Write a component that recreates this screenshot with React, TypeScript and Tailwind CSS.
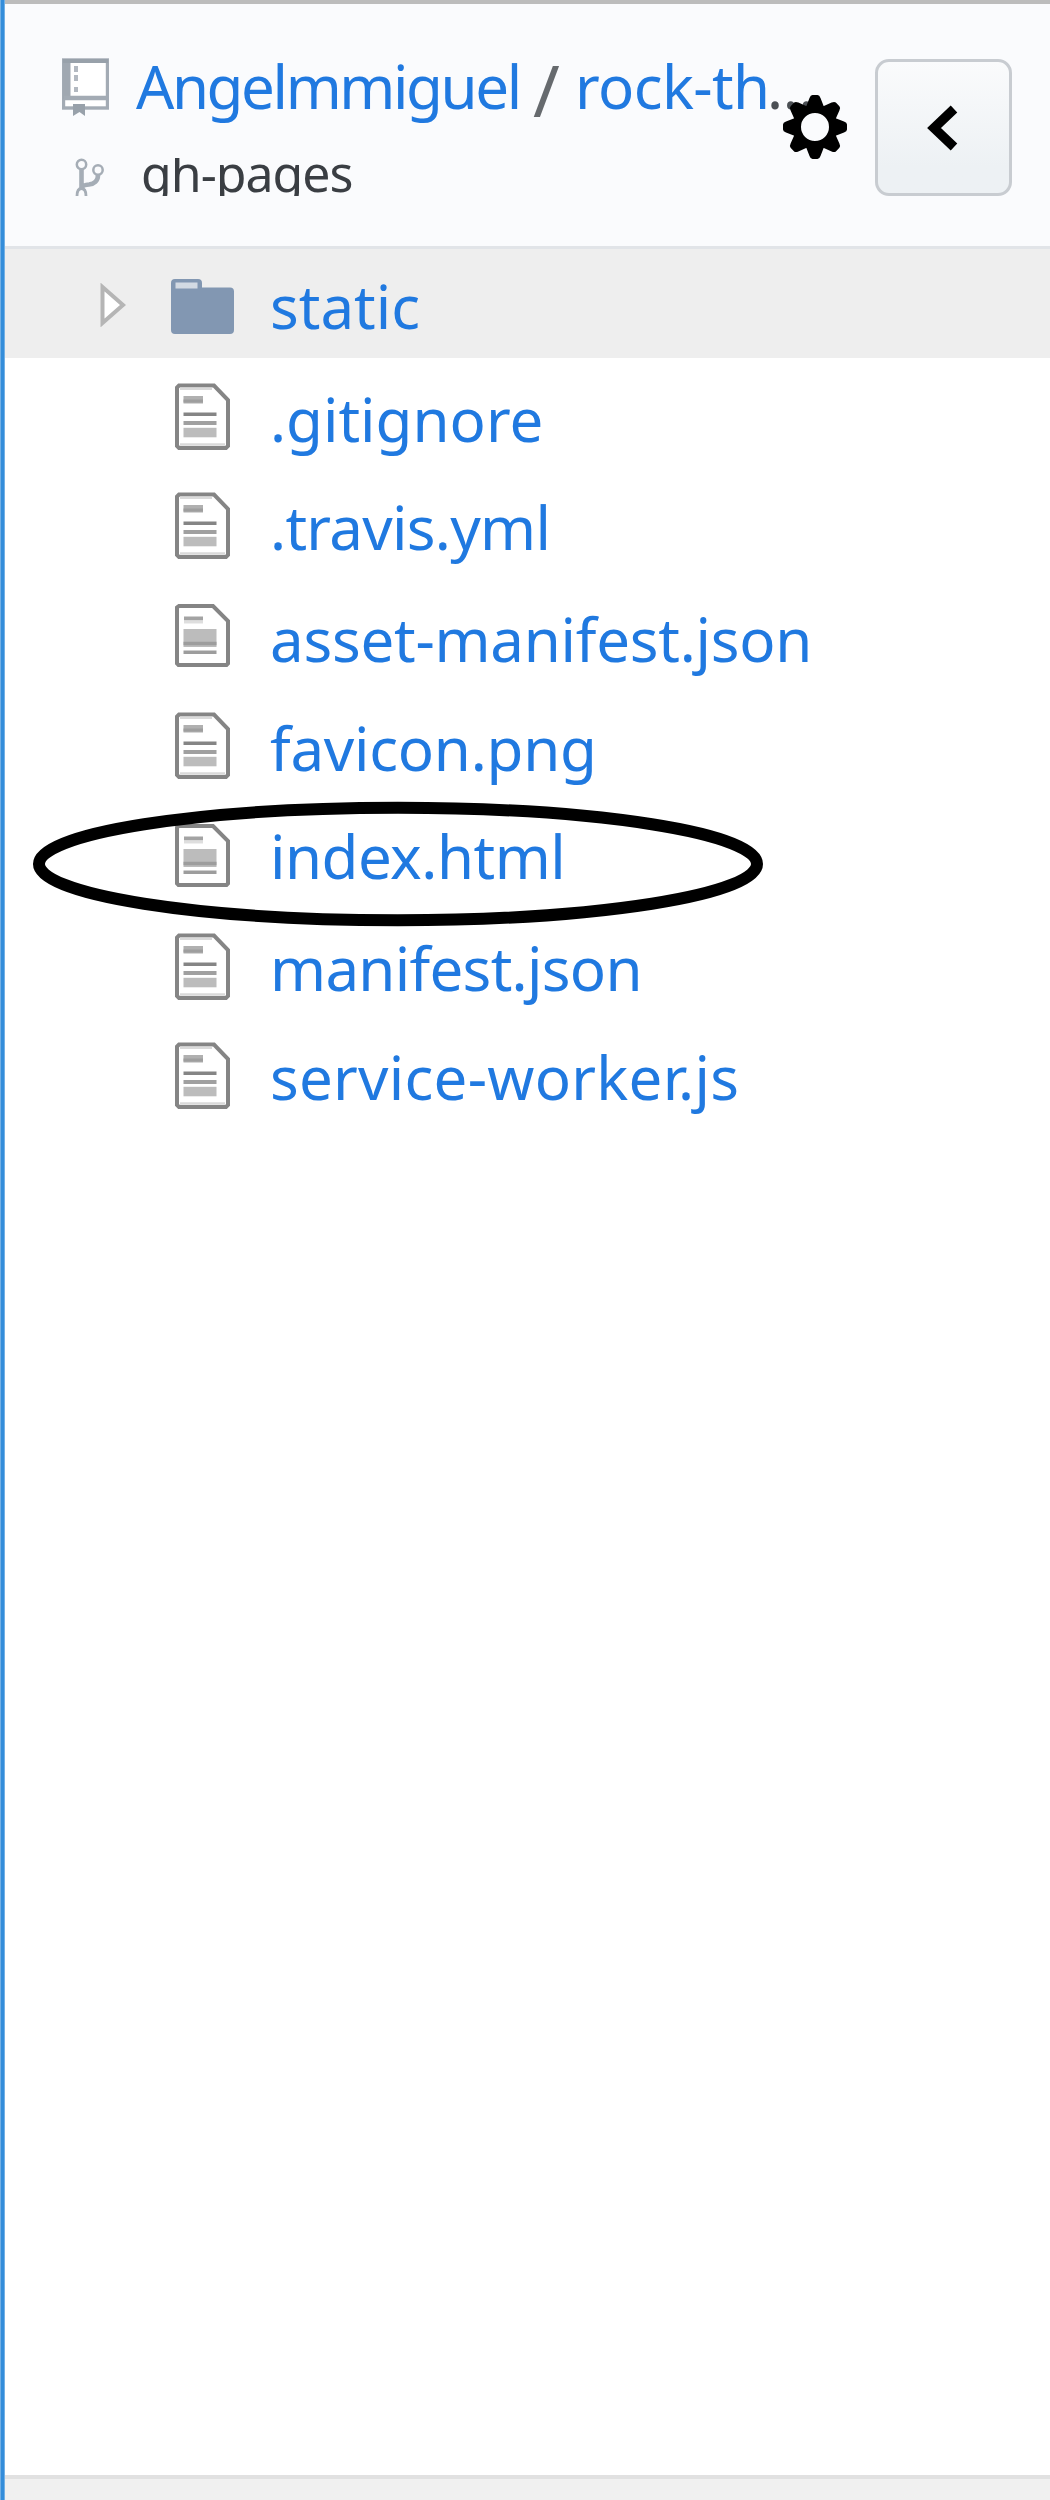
function RepoIcon() {
  return (
    <svg className="h-[60px] w-[47px] shrink-0" viewBox="0 0 47 60">
      <rect x="1.5" y="2" width="44" height="48" fill="#fff" stroke="#a3abb4" strokeWidth="3.4" />
      <rect x="1" y="1" width="7.5" height="40" fill="#a0a8b1" />
      <path d="M1 3H46" stroke="#98a1aa" strokeWidth="4" />
      <path d="M2 40H45" stroke="#a3abb4" strokeWidth="4.500" />
      <path d="M14 8v6M14 17v6M14 29v5" stroke="#b3b9c1" strokeWidth="4" />
      <path d="M11 46h12v12l-5.500-4l-6.500 4z" fill="#98a1aa" />
    </svg>
  );
}

function BranchIcon() {
  return (
    <svg className="h-[38px] w-[29px] shrink-0" viewBox="0 0 29 38" fill="none" stroke="#a5adb6">
      <circle cx="6.500" cy="6.500" r="4.700" strokeWidth="2.500" />
      <circle cx="23" cy="12" r="4.700" strokeWidth="2.500" />
      <path d="M6.500 11V30M23 17c0 6-4 9-9 9.500c-4 .3-6 1-7 2.500" strokeWidth="4.600" />
      <path d="M2 38c0-5 2-7.500 4.500-7.500s4.500 2.500 4.500 7.500" strokeWidth="2.800" />
    </svg>
  );
}

function GearIcon() {
  return (
    <svg className="h-16 w-16" viewBox="-32 -32 64 64">
      <g fill="#000">
        {[0, 45, 90, 135, 180, 225, 270, 315].map((angle) => (
          <path key={angle} d="M-9-20L-5.500-29Q-4.500-32-2.500-32H2.500Q4.500-32 5.500-29L9-20z" transform={`rotate(${angle})`} />
        ))}
      </g>
      <circle r="18.200" fill="#fafbfd" stroke="#000" strokeWidth="8.400" />
    </svg>
  );
}

function FolderIcon() {
  return (
    <svg className="h-[55px] w-[63px] shrink-0" viewBox="0 0 63 55">
      <path d="M0 4q0-4 4-4H27q4 0 4 4v4.500H59q4 0 4 4V51q0 4-4 4H4q-4 0-4-4z" fill="#8297b2" />
      <rect x="4.500" y="3.500" width="22" height="6" fill="#d3dae3" />
    </svg>
  );
}

function FileIcon({ short }: { short?: boolean }) {
  return short ? (
    <svg className="h-[63px] w-[55px] shrink-0" viewBox="0 0 55 63">
      <path d="M4 2H38L53 17V59.500L51.500 61H3.500L2 59.500V3.500z" fill="#fff" stroke="#858585" strokeWidth="4" />
      <path d="M9 14.500H28" stroke="#a3a3a3" strokeWidth="4" />
      <path d="M9 18H28" stroke="#dedede" strokeWidth="3" />
      <rect x="8.500" y="25" width="33" height="18" fill="#bcbcbc" />
      <path d="M8.500 39.500H41.500M8.500 48.200H41.500" stroke="#9d9d9d" strokeWidth="3.500" />
    </svg>
  ) : (
    <svg className="h-[67px] w-[55px] shrink-0" viewBox="0 0 55 67">
      <path d="M4 2.500H39L53 17V63L51 65H4L2 63V4.500z" fill="#fff" stroke="#858585" strokeWidth="4" />
      <path d="M5 5.800H37M5 61.500H50" stroke="#dadada" strokeWidth="2.500" />
      <rect x="8.500" y="13" width="19.500" height="7.500" fill="#b0b0b0" />
      <path d="M8.500 18H28" stroke="#9e9e9e" strokeWidth="3" />
      <path d="M8.500 31.200H41.500" stroke="#858585" strokeWidth="3.600" />
      <path d="M8.500 40H41.500" stroke="#a0a0a0" strokeWidth="3.800" />
      <rect x="8.500" y="44.800" width="33" height="9.500" fill="#bcbcbc" />
    </svg>
  );
}

const files = [
  { name: ".gitignore", row: "h-[108px]", icon: "mt-[23px]", text: "tracking-[0px]" },
  { name: ".travis.yml", row: "h-[112px]", icon: "mt-[24px]", text: "tracking-[-0.7px]" },
  { name: "asset-manifest.json", row: "h-[109px]", icon: "mt-[24px]", text: "tracking-[-0.25px]", short: true },
  { name: "favicon.png", row: "h-[108px]", icon: "mt-[23px]", text: "tracking-[-0.25px]" },
  { name: "index.html", row: "h-[112px]", icon: "mt-[27px]", text: "tracking-[-0.5px]", short: true, circled: true },
  { name: "manifest.json", row: "h-[109px]", icon: "mt-[24px]", text: "tracking-[-0.7px]" },
  { name: "service-worker.js", row: "h-[110px]", icon: "mt-[24px]", text: "tracking-[0.25px]" },
];

export default function App() {
  return (
    <div className="flex h-[2500px] w-[1050px] overflow-hidden bg-white font-['Noto_Sans',sans-serif] text-[60px] whitespace-nowrap text-[#2079e0]">
      <div className="w-[5px] shrink-0 border-x border-[#73b0e5] bg-[#348dda]" />
      <div className="flex min-w-0 flex-1 flex-col">
        <header className="flex h-[249px] shrink-0 border-t-4 border-b-[3px] border-t-[#bcbcbc] border-b-[#e1e4e8] bg-[#fafbfd]">
          <div className="w-[778px] shrink-0">
            <div className="flex h-[110px] pl-[57px] leading-[110px]">
              <div className="mt-[54px]"><RepoIcon /></div>
              <div className="mt-[27px] ml-[27px] flex">
                <a className="w-[397px] tracking-[-2.4px]">Angelmmiguel</a>
                <span className="h-[110px] w-[42px] origin-left translate-y-[3px] scale-[1.2] text-[#666a6e]">/</span>
                <a className="w-[192px] tracking-[-0.6px]">rock-th</a>
                <span className="tracking-[-1px] text-[#4b4f54]">…</span>
              </div>
            </div>
            <div className="mt-[44px] flex h-[38px] overflow-hidden pl-[70px]">
              <BranchIcon />
              <span className="mt-[-35px] ml-[37px] text-[50px] leading-[100px] tracking-[-1px] text-[#3a3e43]">gh-pages</span>
            </div>
          </div>
          <button className="relative mt-[91px] h-16 w-16 shrink-0"><GearIcon /></button>
          <button className="mt-[55px] ml-[28px] flex h-[137px] w-[137px] shrink-0 items-center justify-center rounded-[14px] border-[3px] border-[#c8ccd1] bg-linear-to-b from-[#fafbfc] to-[#edf1f4] to-80%">
            <svg className="mr-[3px] h-[48px] w-[32px]" viewBox="0 0 32 48" fill="none" stroke="#000" strokeWidth="9.500">
              <path d="M28 5L8 24L28 43" />
            </svg>
          </button>
        </header>
        <main className="relative flex-1">
          <div className="mb-0.5 flex h-[109px] bg-[#eee] pl-[95px] leading-[110px]">
            <svg className="mt-[34px] h-[44px] w-[26px]" viewBox="0 0 26 44">
              <path d="M2.500 4L23 22L2.500 40z" fill="#fff" stroke="#b5b5b5" strokeWidth="4" />
            </svg>
            <div className="mt-[30px] ml-[45px]"><FolderIcon /></div>
            <a className="mt-0.5 ml-[36px]">static</a>
          </div>
          {files.map((file) => (
            <div key={file.name} className={`relative flex pl-[170px] leading-[110px] ${file.row}`}>
              <div className={file.icon}><FileIcon short={file.short} /></div>
              <a className={`mt-1 ml-10 ${file.text}`}>{file.name}</a>
              {file.circled && (
                <svg className="absolute top-[4px] left-[27px] h-[126px] w-[732px]" viewBox="0 0 732 126">
                  <ellipse cx="366" cy="63" rx="359" ry="56.200" fill="none" stroke="#000" strokeWidth="12" />
                </svg>
              )}
            </div>
          ))}
        </main>
        <footer className="h-[25px] shrink-0 border-t-4 border-[#e1e1e1] bg-[#f0f0f0]" />
      </div>
    </div>
  );
}
